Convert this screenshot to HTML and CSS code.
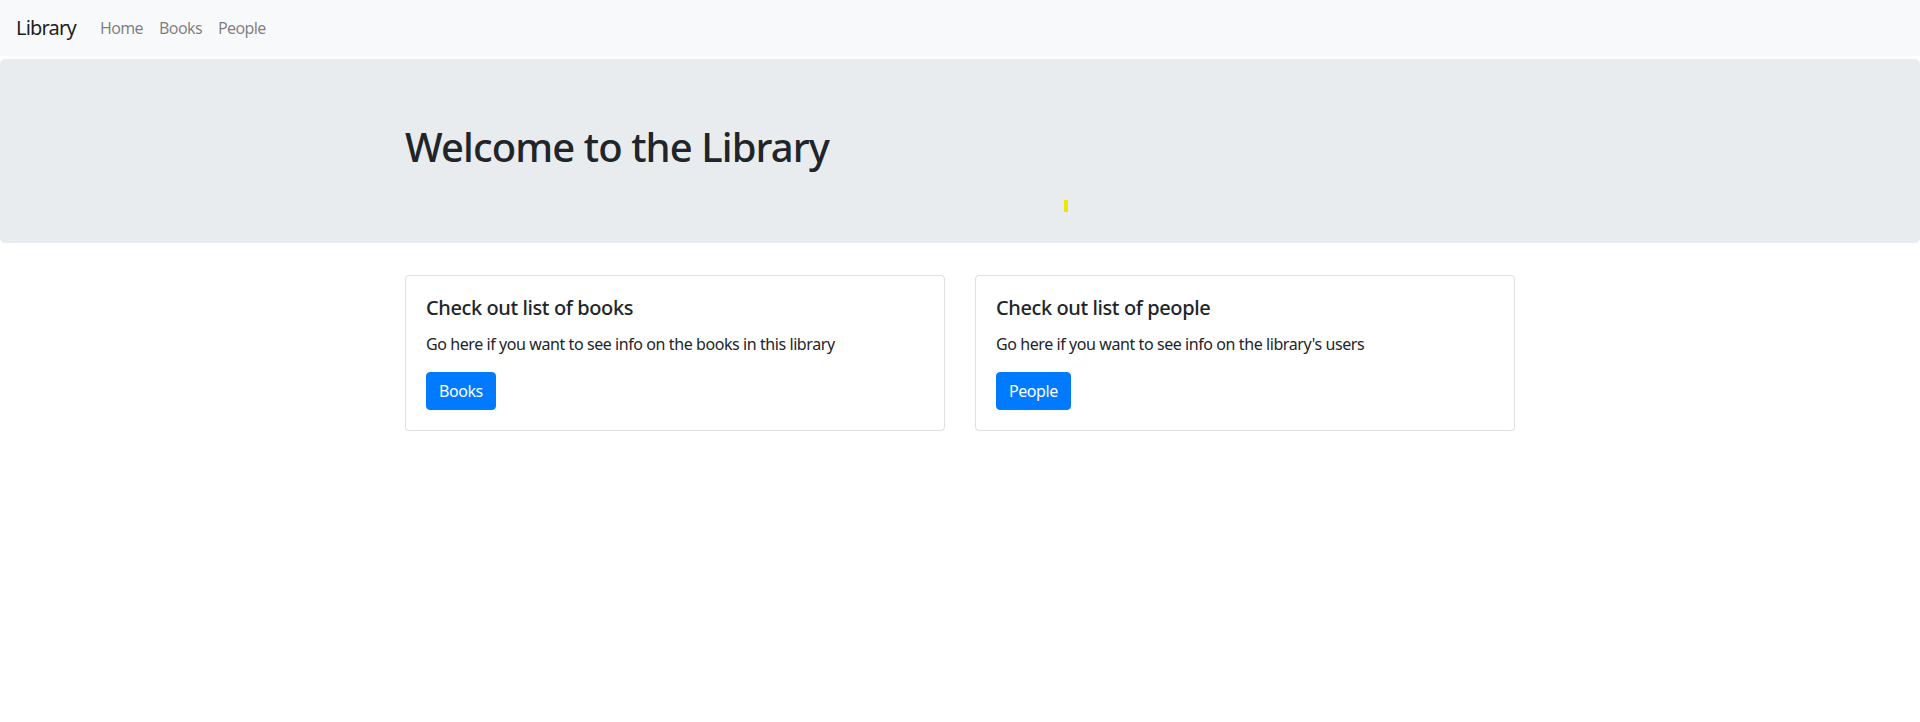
FILE: index.html
```html
<!DOCTYPE html>
<html lang="en">
<head>
<meta charset="utf-8">
<title>Library</title>
<link rel="stylesheet" href="styles.css">
</head>
<body>
<nav class="navbar">
  <a class="brand" href="#">Library</a>
  <ul class="nav">
    <li><a class="nav-link" href="#">Home</a></li>
    <li><a class="nav-link" href="#">Books</a></li>
    <li><a class="nav-link" href="#">People</a></li>
  </ul>
</nav>
<header class="jumbotron">
  <div class="container">
    <h1 class="display">Welcome to the Library</h1>
  </div>
  <span class="marker"></span>
</header>
<main class="container">
  <div class="row">
    <div class="col">
      <div class="card">
        <h5 class="card-title">Check out list of books</h5>
        <p class="card-text">Go here if you want to see info on the books in this library</p>
        <a class="btn" href="#">Books</a>
      </div>
    </div>
    <div class="col">
      <div class="card">
        <h5 class="card-title">Check out list of people</h5>
        <p class="card-text">Go here if you want to see info on the library's users</p>
        <a class="btn" href="#">People</a>
      </div>
    </div>
  </div>
</main>
</body>
</html>
```
FILE: styles.css
```css
* { box-sizing: border-box; }
html, body { margin: 0; }
body {
  font-family: "Noto Sans", "Open Sans", sans-serif;
  font-size: 16px;
  line-height: 1.5;
  letter-spacing: -0.42px;
  color: #212529;
  background: #fff;
}
a { text-decoration: none; }

.navbar {
  display: flex;
  align-items: center;
  height: 56px;
  padding: 8px 16px;
  background: #f8f9fa;
}
.brand {
  font-size: 20px;
  line-height: 30px;
  padding: 5px 0;
  margin-right: 16px;
  letter-spacing: -0.8px;
  color: rgba(0,0,0,.9);
}
.nav {
  display: flex;
  list-style: none;
  margin: 0;
  padding: 0;
}
.nav-link {
  display: block;
  padding: 8px;
  letter-spacing: -0.6px;
  color: rgba(0,0,0,.5);
}

.jumbotron {
  position: relative;
  margin: 3px 0 32px;
  padding: 64px 0;
  background: #e9ecef;
  border-radius: 5px;
}
.container {
  width: 1140px;
  margin: 0 auto;
  padding: 0 15px;
}
.display {
  margin: 0 0 8px;
  font-size: 40px;
  font-weight: 500;
  line-height: 48px;
  letter-spacing: -0.9px;
}
.marker {
  position: absolute;
  left: 1064px;
  top: 141px;
  width: 4px;
  height: 12px;
  background: #e8e800;
}

.row {
  display: grid;
  grid-template-columns: 1fr 1fr;
  column-gap: 30px;
}
.card {
  border: 1px solid rgba(0,0,0,.125);
  border-radius: 4px;
  padding: 20px;
}
.card-title {
  margin: 0 0 12px;
  font-size: 20px;
  font-weight: 500;
  line-height: 24px;
  letter-spacing: -0.4px;
}
.card-text {
  margin: 0 0 16px;
}
.btn {
  display: inline-block;
  padding: 6px 12px;
  border: 1px solid #007bff;
  border-radius: 4px;
  background: #007bff;
  color: #fff;
  line-height: 24px;
}
```
